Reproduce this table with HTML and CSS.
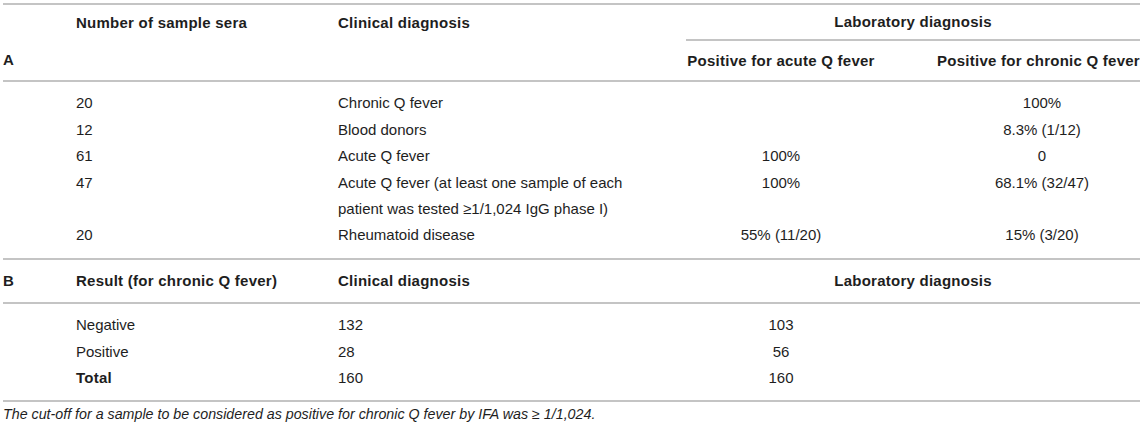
FILE: index.html
```html
<!DOCTYPE html>
<html lang="en">
<head>
    <meta charset="UTF-8">
    <meta name="viewport" content="width=device-width, initial-scale=1.0">
    <title>Q fever serology</title>
    <link rel="stylesheet" href="styles.css">
</head>
<body>
    <table class="qtable">
        <colgroup>
            <col class="c-tag">
            <col class="c-first">
            <col class="c-clin">
            <col class="c-acute">
            <col class="c-chronic">
        </colgroup>
        <thead>
            <tr class="head-top">
                <th></th>
                <th>Number of sample sera</th>
                <th>Clinical diagnosis</th>
                <th class="lab" colspan="2">Laboratory diagnosis</th>
            </tr>
            <tr class="head-sub">
                <th>A</th>
                <th></th>
                <th></th>
                <th class="mid">Positive for acute Q fever</th>
                <th class="mid chronic">Positive for chronic Q fever</th>
            </tr>
        </thead>
        <tbody>
            <tr class="first">
                <td></td>
                <td>20</td>
                <td>Chronic Q fever</td>
                <td class="mid"></td>
                <td class="mid chronic">100%</td>
            </tr>
            <tr>
                <td></td>
                <td>12</td>
                <td>Blood donors</td>
                <td class="mid"></td>
                <td class="mid chronic">8.3% (1/12)</td>
            </tr>
            <tr>
                <td></td>
                <td>61</td>
                <td>Acute Q fever</td>
                <td class="mid">100%</td>
                <td class="mid chronic">0</td>
            </tr>
            <tr>
                <td></td>
                <td>47</td>
                <td>Acute Q fever (at least one sample of each<br>patient was tested ≥1/1,024 IgG phase I)</td>
                <td class="mid">100%</td>
                <td class="mid chronic">68.1% (32/47)</td>
            </tr>
            <tr class="last">
                <td></td>
                <td>20</td>
                <td>Rheumatoid disease</td>
                <td class="mid">55% (11/20)</td>
                <td class="mid chronic">15% (3/20)</td>
            </tr>
        </tbody>
        <tbody class="part-b">
            <tr class="head-b">
                <th>B</th>
                <th>Result (for chronic Q fever)</th>
                <th>Clinical diagnosis</th>
                <th class="mid" colspan="2">Laboratory diagnosis</th>
            </tr>
            <tr class="first">
                <td></td>
                <td>Negative</td>
                <td>132</td>
                <td class="mid">103</td>
                <td></td>
            </tr>
            <tr>
                <td></td>
                <td>Positive</td>
                <td>28</td>
                <td class="mid">56</td>
                <td></td>
            </tr>
            <tr class="last">
                <td></td>
                <td><b>Total</b></td>
                <td>160</td>
                <td class="mid">160</td>
                <td></td>
            </tr>
        </tbody>
    </table>
    <p class="note">The cut-off for a sample to be considered as positive for chronic Q fever by IFA was ≥ 1/1,024.</p>
</body>
</html>
```

FILE: styles.css
```css
body {
    margin: 0;
    padding: 3px 3px 0 3px;
    background-color: white;
    color: #1e1e1e;
    font-family: "Liberation Sans", Arial, sans-serif;
    font-size: 15px;
}

.qtable {
    width: 1137px;
    border-collapse: collapse;
    table-layout: fixed;
    line-height: 26.4px;
}

.c-tag { width: 73px; }
.c-first { width: 262px; }
.c-clin { width: 348px; }
.c-acute { width: 190px; }
.c-chronic { width: 264px; }

.qtable th,
.qtable td {
    padding: 0;
    text-align: left;
    vertical-align: top;
    white-space: nowrap;
}

.qtable th {
    font-weight: bold;
    letter-spacing: 0.25px;
    vertical-align: middle;
}

.qtable b {
    letter-spacing: 0.25px;
}

.qtable .mid {
    text-align: center;
}

.qtable th.chronic {
    padding-left: 61px;
}

.qtable td.chronic {
    padding-left: 68px;
}

.head-top th {
    border-top: 2px solid #c4c4c4;
    padding-top: 4px;
    padding-bottom: 4px;
}

.head-top .lab {
    text-align: center;
    border-bottom: 2px solid #c4c4c4;
}

.head-sub th {
    height: 39px;
    padding: 0;
}

.qtable tbody tr.first td {
    border-top: 2px solid #c4c4c4;
    padding-top: 8px;
}

.qtable tbody tr.last td {
    padding-bottom: 9px;
}

.head-b th {
    border-top: 2px solid #c4c4c4;
    padding-top: 8px;
    padding-bottom: 8px;
}

.part-b tr.first td {
    padding-top: 7px;
}

.part-b tr.last td {
    border-bottom: 2px solid #c4c4c4;
    padding-bottom: 5px;
}

.note {
    margin: 0;
    padding-top: 2px;
    font-size: 14.25px;
    font-style: italic;
    line-height: 20px;
}
```
